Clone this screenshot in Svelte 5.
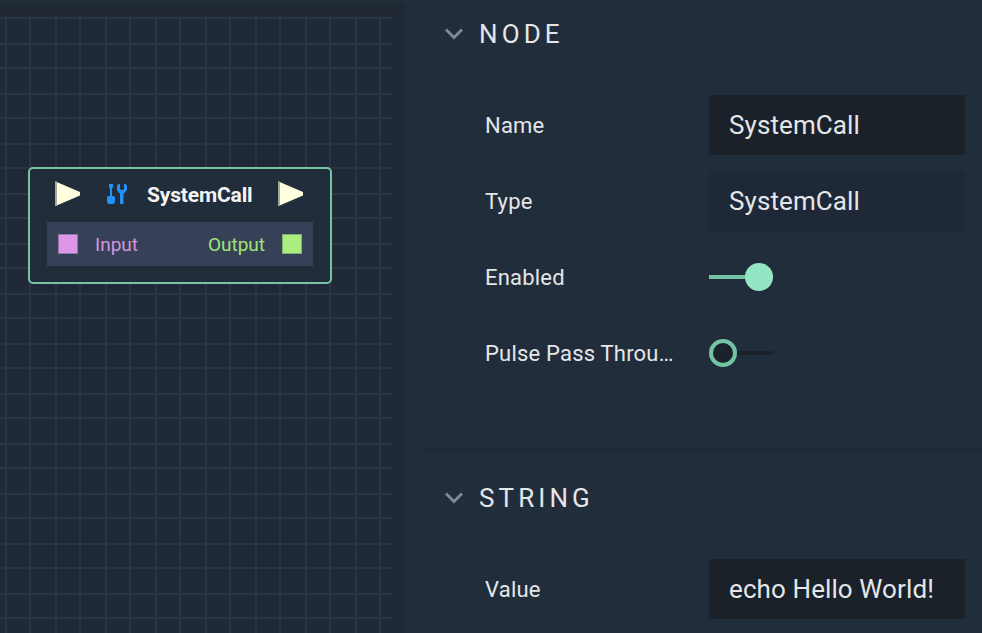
<script>
  const fields = [
    { label: 'Name', value: 'SystemCall', kind: 'input' },
    { label: 'Type', value: 'SystemCall', kind: 'readonly' },
    { label: 'Enabled', kind: 'toggle', on: true },
    { label: 'Pulse Pass Throu…', kind: 'toggle', on: false }
  ];
</script>

{#snippet chevron()}
  <svg class="chevron" width="18" height="12" viewBox="0 0 18 12"><path d="M1 1.5 9 9.5 17 1.5" fill="none" stroke="#858b95" stroke-width="2.7" /></svg>
{/snippet}

{#snippet pulse()}
  <svg width="26" height="26" viewBox="0 0 26 26">
    <path d="M.5 .5 25 11V14.5L.5 25Z" fill="#ffffdf" />
    <path d="M0 .5H2V25H0Z" fill="#a5a89d" />
  </svg>
{/snippet}

<div class="app">
  <section class="canvas">
    <div class="grid"></div>
    <div class="node">
      <header>
        {@render pulse()}
        <svg class="tools" width="22" height="22" viewBox="0 0 22 22" fill="#2292f8">
          <path d="M2 0H6V3L5 5V12H7L8 13V18L6.5 20H1.5L0 18V13L1 12H3V5L2 3Z" />
          <path d="M10 1.5 11.5 0H13V4.5L14 6H16L17 4.5V0H18.5L20 1.5V6L18 8.5 16.5 9.5V20H13V9.5L11.5 8.5 10 6Z" />
        </svg>
        <span class="title">SystemCall</span>
        {@render pulse()}
      </header>
      <div class="ports">
        <i class="port in"></i><span class="in-text">Input</span>
        <span class="out-text">Output</span><i class="port out"></i>
      </div>
    </div>
  </section>
  <aside>
    <section class="group first">
      <h2>{@render chevron()}<span>NODE</span></h2>
      <div class="fields">
        {#each fields as field}
          <div class="row">
            <span class="label">{field.label}</span>
            {#if field.kind === 'toggle'}
              <div class="toggle" class:on={field.on}><i></i></div>
            {:else}
              <div class="value" class:readonly={field.kind === 'readonly'}>{field.value}</div>
            {/if}
          </div>
        {/each}
      </div>
    </section>
    <section class="group second">
      <h2>{@render chevron()}<span>STRING</span></h2>
      <div class="fields">
        <div class="row"><span class="label">Value</span><div class="value">echo Hello World!</div></div>
      </div>
    </section>
  </aside>
</div>

<style>
  .app {
    display: flex;
    width: 982px;
    height: 633px;
    overflow: hidden;
    box-sizing: border-box;
    padding-top: 3px;
    background: #222d3c;
    color: #e4e6e9;
    font-family: Roboto, sans-serif;
  }
  .canvas {
    position: relative;
    flex: none;
    width: 405px;
    height: 630px;
    background: #1f2833;
    box-sizing: border-box;
    padding-top: 12px;
  }
  .grid {
    width: 393px;
    height: 618px;
    --line: #2b3441;
    background:
      linear-gradient(90deg, transparent 5px, var(--line) 5px 7px, transparent 7px 29px, var(--line) 29px 31px, transparent 31px) 0 0 / 50px 50px,
      linear-gradient(transparent 2px, var(--line) 2px 4px, transparent 4px 28px, var(--line) 28px 30px, transparent 30px) 0 0 / 50px 50px,
      #1f2836;
  }
  .node {
    position: absolute;
    left: 28px;
    top: 164px;
    width: 304px;
    height: 117px;
    box-sizing: border-box;
    border: 2px solid #76c4a2;
    border-radius: 5px;
    background: #222d3b;
    padding: 12px 17px 0;
  }
  header {
    display: flex;
    height: 26px;
    padding-left: 8px;
    align-items: flex-start;
  }
  .tools { margin: 3px 0 0 26px; }
  .title {
    width: 131px;
    margin-left: 18px;
    font-size: 21px;
    line-height: 29px;
    font-weight: 700;
    color: #f4f4f4;
    letter-spacing: -0.15px;
  }
  .ports {
    display: flex;
    align-items: center;
    height: 44px;
    margin-top: 15px;
    padding: 0 11px;
    box-sizing: border-box;
    background: #364157;
    font-size: 19px;
  }
  .port { width: 20px; height: 20px; box-sizing: border-box; }
  .in { background: #dc98e6; border: 1px solid #9974ab; }
  .out { background: #a9ee7e; border: 1px solid #7fae70; }
  .in-text { color: #d294dc; margin-left: 17px; }
  .out-text { color: #a0e37a; margin-left: auto; margin-right: 17px; }
  aside { flex: 1; padding-left: 17px; }
  .group { padding-left: 23px; }
  .first { height: 444px; }
  .second { border-top: 4px solid #1f2935; height: 182px; }
  h2 {
    display: flex;
    align-items: center;
    height: 62px;
    margin: 0;
    font-size: 26px;
    font-weight: 400;
    letter-spacing: 4.1px;
  }
  .second h2 { height: 94px; }
  .first h2 { margin-bottom: 30px; }
  .chevron { width: 18px; margin-right: 16px; }
  .fields { padding-left: 40px; }
  .second .fields { margin-top: 14px; }
  .row { display: flex; align-items: center; height: 60px; margin-bottom: 16px; }
  .label { width: 224px; font-size: 22px; letter-spacing: 0.2px; white-space: nowrap; }
  .value {
    width: 256px;
    height: 60px;
    line-height: 60px;
    box-sizing: border-box;
    padding-left: 20px;
    background: #1a2129;
    font-size: 26px;
    letter-spacing: 0.1px;
  }
  .readonly { background: #1f2836; }
  .toggle {
    display: flex;
    align-items: center;
    width: 64px;
    height: 28px;
    background: linear-gradient(#1b222c, #1b222c) center / 64px 4px no-repeat;
  }
  .toggle i {
    width: 28px;
    height: 28px;
    border-radius: 50%;
    border: 4px solid #73c4a4;
    box-sizing: border-box;
    background: #1b222c;
  }
  .on { justify-content: flex-end; background-image: linear-gradient(#73c4a4, #73c4a4); }
  .on i { background: #94e5c4; border-color: #94e5c4; }
</style>
